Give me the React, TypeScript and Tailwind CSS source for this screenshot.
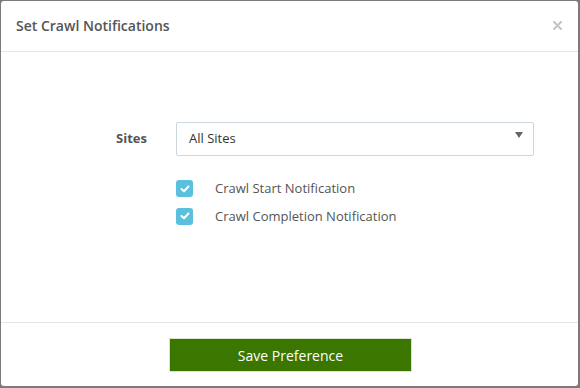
export default function App() {
  const options = ['Crawl Start Notification', 'Crawl Completion Notification']
  return (
    <div className="w-[580px] h-[388px] bg-[#7b7b7b] pl-[1px] pt-[1px] overflow-hidden" style={{ fontFamily: '"Open Sans", "Liberation Sans", sans-serif' }}>
      <div className="w-[577px] h-[385px] bg-white rounded-[3px] flex flex-col">
        {/* Header */}
        <div className="h-[51px] border-b border-[#e5e5e5] flex items-center justify-between pl-[15px] pr-[15px] pb-[1px]">
          <h2 className="text-[14px] font-semibold text-[#555]">Set Crawl Notifications</h2>
          <svg width="9" height="9" viewBox="0 0 9 9" className="mr-[1px]">
            <path d="M1 1 L8 8 M8 1 L1 8" stroke="#c4c4c4" strokeWidth="2" strokeLinecap="round" />
          </svg>
        </div>

        {/* Body */}
        <div className="flex-1 pt-[70px] pr-[44px]">
          <div className="grid grid-cols-[175px_1fr] items-center">
            <label className="text-right pr-[29px] text-[13px] font-bold text-[#555]">Sites</label>
            <div className="h-[34px] border border-[#cdd7de] rounded-[2px] flex items-center justify-between pl-[12px] pr-[10px]">
              <span className="text-[13px] text-[#333]">All Sites</span>
              <svg width="8" height="6" viewBox="0 0 8 6" className="-mt-[8px]">
                <path d="M0 0 L8 0 L4 6 Z" fill="#666" />
              </svg>
            </div>
          </div>
          <div className="pl-[175px] pt-[23px] flex flex-col gap-[8px]">
            {options.map((o) => (
              <div key={o} className="flex items-center gap-[22px]">
                <span className="w-[17px] h-[17px] rounded-[3px] bg-[#5bc0de] flex items-center justify-center">
                  <svg width="10" height="8" viewBox="0 0 10 8">
                    <path d="M1.5 4 L4 6.3 L8.5 1.5" stroke="#fff" strokeWidth="2" fill="none" strokeLinecap="round" strokeLinejoin="round" />
                  </svg>
                </span>
                <span className="text-[13px] text-[#555]">{o}</span>
              </div>
            ))}
          </div>
        </div>

        {/* Footer */}
        <div className="h-[64px] border-t border-[#e5e5e5] flex justify-center pt-[15px] pl-[2px]">
          <button className="w-[243px] h-[34px] bg-[#3a7600] border border-[#d9e3d0] text-white text-[14px]">
            Save Preference
          </button>
        </div>
      </div>
    </div>
  )
}
